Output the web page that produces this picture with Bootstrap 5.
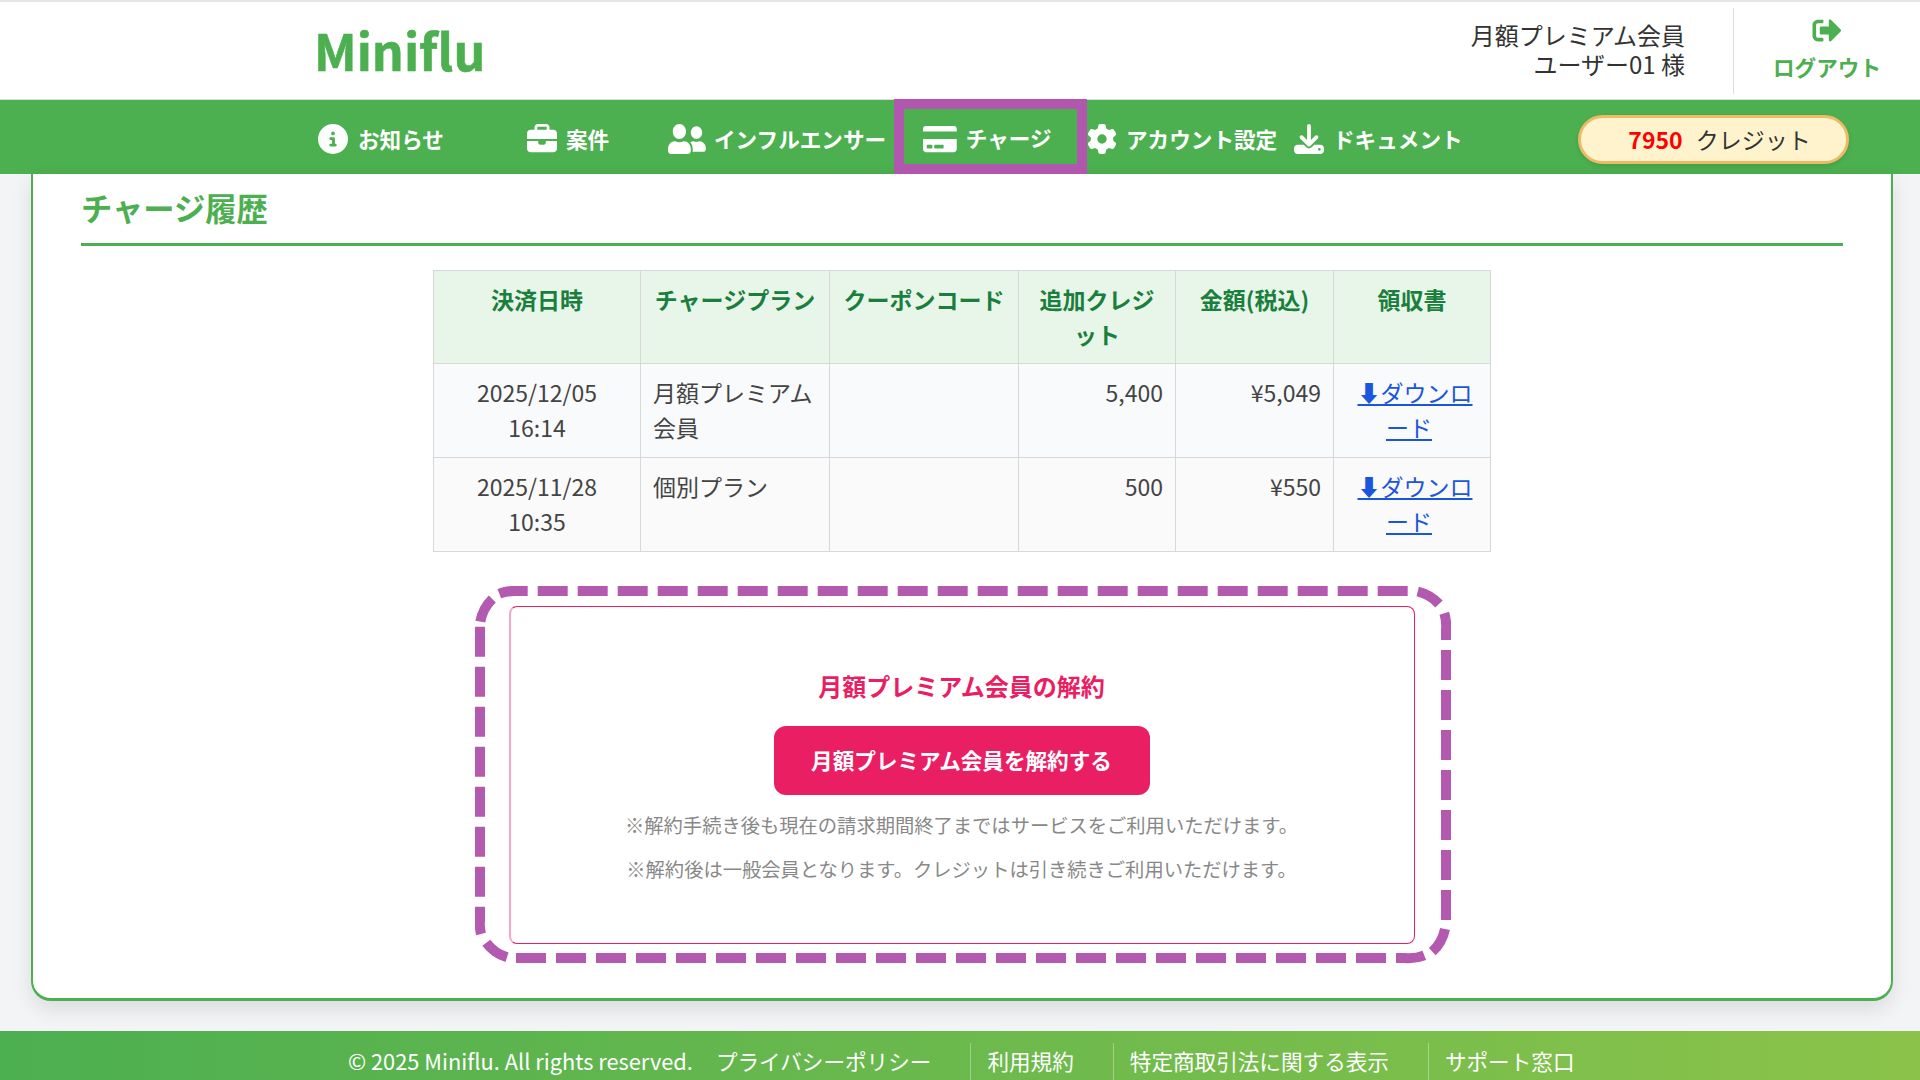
<!DOCTYPE html>
<html lang="ja">
<head>
<meta charset="utf-8">
<title>Miniflu</title>
<link href="https://cdn.jsdelivr.net/npm/bootstrap@5.3.0/dist/css/bootstrap.min.css" rel="stylesheet">
<style>
html,body{height:1080px;overflow:hidden}
body{background:#f3f4f6;font-family:"Noto Sans CJK JP","Noto Sans",sans-serif;color:#333;border-top:2px solid #e5e5e5}
.top-head{height:97px;background:#fff;padding-left:314px}
.brand-logo{font-size:50px;font-weight:700;color:#4caf50;line-height:1;text-decoration:none;padding-bottom:4px;-webkit-text-stroke:.6px #4caf50}
.user-info{font-size:24px;line-height:29px;text-align:right;margin-right:48px;padding-bottom:4px}
.logout-box{width:187px;height:86px;border-left:1px solid #ddd;color:#4caf50;font-weight:700;font-size:21.6px;line-height:28px;text-decoration:none;padding-bottom:5px}
.logout-box svg{width:32px;height:29px;fill:#4caf50}
.green-nav{height:75px;background:#4caf50;padding-left:315px;border-top:1px solid #ddd}
.nav-slot{height:75px;margin-top:-1px;padding-top:5px;color:#fff;font-weight:700;font-size:21.6px;text-decoration:none;white-space:nowrap}
.nav-slot svg{fill:#fff;height:30px;flex:none}
.nav-slot svg.people-icon{width:38px}
.slot-a{width:212px;padding-left:3px;gap:10px}
.slot-b{width:141px;gap:9px}
.slot-c{width:226px;gap:8px}
.slot-d{width:193px;padding-left:19px;padding-top:0;gap:9px;border:10px solid #b157ae}
.slot-d svg,.slot-d span{position:relative;top:2px}
.slot-e{width:207px;gap:9px}
.slot-f{width:284px;gap:9px}
.credit-pill{width:271px;height:49px;margin-top:5px;padding-left:12px;border-radius:25px;background:#fff3cd;border:3px solid #edbb66;font-size:23px;box-shadow:0 2px 4px rgba(0,0,0,.1);gap:13px}
.credit-pill b{color:#f00}
.sheet{margin:0 27px 0 31px;height:827px;background:#fff;border:solid #4caf50;border-width:0 2px 3px 2px;border-radius:0 0 20px 20px;box-shadow:0 8px 20px rgba(0,0,0,.1);padding:0 48px}
.sheet-title{font-size:31.3px;font-weight:700;color:#4caf50;margin:0;height:72px;line-height:67px;border-bottom:3px solid #4caf50}
.hist-table{width:1057px;table-layout:fixed;margin:24px auto 0;border-collapse:collapse;font-size:23px;line-height:34.5px;color:#444}
.hist-table th,.hist-table td{border:1px solid #d8d8d8;padding:11px 12px 12px;vertical-align:top}
.hist-table td{padding-bottom:13px}
.hist-table th{background:#e8f5e9;color:#1a7f3c;text-align:center;font-weight:700}
.hist-table tbody tr:nth-child(1) td{background:#f9fafc}
.hist-table tbody tr:nth-child(2) td{background:#fafafa}
.hist-table a{color:#1a56db}
.hist-table td.dl-cell{padding-left:10px;padding-right:16px;text-indent:12px}
.dash-frame{width:976px;height:378px;margin:34px 0 0 394px;padding:20px 36px 20px 34px}
.dash-lines{position:absolute;left:0;top:0;width:976px;height:378px;fill:none;stroke:#b359b0;stroke-width:10}
.cancel-box{height:338px;border:1px solid #e91e63;border-left:2px solid #f8a5c2;border-radius:8px;text-align:center;padding:61px 2px 0 0}
.cancel-title{color:#e91e63;font-weight:700;font-size:24px;line-height:36px;margin-bottom:22px}
.cancel-btn{width:376px;height:69px;background:#e91e63;color:#fff;border:0;border-radius:12px;font-weight:700;font-size:21.6px}
.cancel-note{color:#888;font-size:19.3px;line-height:28px;margin:16px 0 0}
.page-foot{height:60px;margin-top:30px;padding:12px 0 0 348px;background:linear-gradient(90deg,#4caf50,#8bc34a);color:#fff;font-size:21.6px}
.foot-copy{font-size:21.8px;line-height:36px;margin-right:23px}
.foot-link{height:48px;line-height:36px;padding-right:39px;margin-right:16px;border-right:1px solid rgba(255,255,255,.35)}
.foot-last{border-right:0;margin-right:0}
</style>
</head>
<body>
<header class="top-head d-flex align-items-center justify-content-between">
  <a class="brand-logo" href="#">Miniflu</a>
  <div class="d-flex align-items-center">
    <div class="user-info">月額プレミアム会員<br>ユーザー01 様</div>
    <a class="logout-box d-flex flex-column align-items-center justify-content-center" href="#">
      <svg viewBox="0 0 512 512"><path d="M497 273L329 441c-15 15-41 4.500-41-17v-96H152c-13.300 0-24-10.700-24-24v-96c0-13.300 10.700-24 24-24h136V88c0-21.400 25.900-32 41-17l168 168c9.300 9.400 9.300 24.600 0 34zM192 436v-40c0-6.600-5.400-12-12-12H96c-17.700 0-32-14.300-32-32V160c0-17.700 14.300-32 32-32h84c6.600 0 12-5.400 12-12V76c0-6.600-5.400-12-12-12H96c-53 0-96 43-96 96v192c0 53 43 96 96 96h84c6.600 0 12-5.400 12-12z"/></svg>
      <span class="mt-2">ログアウト</span>
    </a>
  </div>
</header>
<nav class="green-nav d-flex align-items-center">
  <a class="nav-slot slot-a d-flex align-items-center" href="#"><svg viewBox="0 0 512 512"><path d="M256 512A256 256 0 1 0 256 0a256 256 0 1 0 0 512zM216 336h24V272H216c-13.300 0-24-10.700-24-24s10.700-24 24-24h48c13.300 0 24 10.700 24 24v88h8c13.300 0 24 10.700 24 24s-10.700 24-24 24H216c-13.300 0-24-10.700-24-24s10.700-24 24-24zm40-208a32 32 0 1 1 0 64 32 32 0 1 1 0-64z"/></svg>お知らせ</a>
  <a class="nav-slot slot-b d-flex align-items-center" href="#"><svg viewBox="0 0 512 512"><path d="M184 48H328c4.400 0 8 3.600 8 8V96H176V56c0-4.400 3.600-8 8-8zm-56 8V96H64C28.700 96 0 124.700 0 160v96H192 320 512V160c0-35.300-28.700-64-64-64H384V56c0-30.900-25.100-56-56-56H184c-30.900 0-56 25.100-56 56zM512 288H320v32c0 17.700-14.300 32-32 32H224c-17.700 0-32-14.300-32-32V288H0V416c0 35.300 28.700 64 64 64H448c35.300 0 64-28.700 64-64V288z"/></svg>案件</a>
  <a class="nav-slot slot-c d-flex align-items-center" href="#"><svg class="people-icon" viewBox="0 32 640 448" preserveAspectRatio="none"><path d="M192 256c61.900 0 112-50.100 112-112S253.900 32 192 32 80 82.100 80 144s50.100 112 112 112zm76.800 32h-8.300c-20.800 10-43.900 16-68.500 16s-47.600-6-68.500-16h-8.300C51.600 288 0 339.600 0 403.200V432c0 26.500 21.500 48 48 48h288c26.500 0 48-21.500 48-48v-28.800c0-63.600-51.600-115.200-115.200-115.200zM480 256c53 0 96-43 96-96s-43-96-96-96-96 43-96 96 43 96 96 96zm48 32h-3.800c-13.900 4.800-28.600 8-44.200 8s-30.300-3.200-44.200-8H432c-20.400 0-39.200 5.900-55.700 15.400 24.400 26.300 39.700 61.200 39.700 99.800v38.400c0 2.200-.5 4.300-.6 6.400H592c26.500 0 48-21.500 48-48 0-61.900-50.100-112-112-112z"/></svg>インフルエンサー</a>
  <a class="nav-slot slot-d d-flex align-items-center" href="#"><svg viewBox="0 0 576 512"><path d="M0 432c0 26.500 21.500 48 48 48h480c26.500 0 48-21.500 48-48V256H0v176zm192-68c0-6.600 5.400-12 12-12h136c6.600 0 12 5.400 12 12v40c0 6.600-5.400 12-12 12H204c-6.600 0-12-5.400-12-12v-40zm-128 0c0-6.600 5.400-12 12-12h72c6.600 0 12 5.400 12 12v40c0 6.600-5.400 12-12 12H76c-6.600 0-12-5.400-12-12v-40zM576 80v48H0V80c0-26.500 21.500-48 48-48h480c26.500 0 48 21.500 48 48z"/></svg><span>チャージ</span></a>
  <a class="nav-slot slot-e d-flex align-items-center" href="#"><svg viewBox="0 0 512 512"><path d="M495.900 166.600c3.200 8.700 .5 18.400-6.400 24.600l-43.300 39.400c1.100 8.300 1.700 16.800 1.700 25.400s-.6 17.100-1.700 25.400l43.300 39.400c6.900 6.200 9.600 15.900 6.400 24.600c-4.400 11.900-9.700 23.300-15.800 34.300l-4.700 8.100c-6.600 11-14 21.400-22.100 31.200c-5.900 7.200-15.700 9.600-24.500 6.800l-55.700-17.700c-13.400 10.300-28.200 18.900-44 25.400l-12.500 57.100c-2 9.100-9 16.300-18.200 17.800c-13.800 2.300-28 3.500-42.500 3.500s-28.700-1.200-42.500-3.500c-9.200-1.500-16.200-8.700-18.200-17.800l-12.500-57.100c-15.800-6.500-30.600-15.100-44-25.400L83.100 425.900c-8.800 2.800-18.600 .3-24.500-6.800c-8.100-9.800-15.500-20.200-22.100-31.200l-4.700-8.100c-6.100-11-11.400-22.400-15.800-34.300c-3.200-8.700-.5-18.400 6.400-24.600l43.300-39.400C64.600 273.100 64 264.600 64 256s.6-17.100 1.700-25.400L22.400 191.200c-6.900-6.200-9.600-15.900-6.400-24.600c4.400-11.900 9.700-23.300 15.800-34.300l4.700-8.100c6.600-11 14-21.400 22.100-31.200c5.900-7.200 15.700-9.600 24.500-6.800l55.700 17.700c13.400-10.300 28.200-18.900 44-25.400l12.500-57.100c2-9.100 9-16.300 18.200-17.800C227.300 1.200 241.500 0 256 0s28.700 1.200 42.500 3.500c9.200 1.500 16.200 8.700 18.200 17.800l12.500 57.100c15.800 6.500 30.600 15.100 44 25.400l55.700-17.700c8.800-2.800 18.600-.3 24.500 6.800c8.100 9.800 15.500 20.200 22.100 31.200l4.700 8.100c6.100 11 11.400 22.400 15.800 34.300zM256 336a80 80 0 1 0 0-160 80 80 0 1 0 0 160z"/></svg>アカウント設定</a>
  <a class="nav-slot slot-f d-flex align-items-center" href="#"><svg viewBox="0 0 512 512"><path d="M288 32c0-17.700-14.300-32-32-32s-32 14.300-32 32V274.700l-73.400-73.400c-12.500-12.500-32.800-12.500-45.300 0s-12.500 32.800 0 45.300l128 128c12.500 12.500 32.800 12.500 45.300 0l128-128c12.500-12.500 12.500-32.800 0-45.300s-32.800-12.500-45.300 0L288 274.700V32zM64 352c-35.300 0-64 28.700-64 64v32c0 35.300 28.700 64 64 64H448c35.300 0 64-28.700 64-64V416c0-35.300-28.700-64-64-64H346.500l-45.300 45.300c-25 25-65.500 25-90.500 0L165.500 352H64zm368 56a24 24 0 1 1 0 48 24 24 0 1 1 0-48z"/></svg>ドキュメント</a>
  <div class="credit-pill d-flex align-items-center justify-content-center"><b>7950</b><span>クレジット</span></div>
</nav>
<main class="sheet">
  <h2 class="sheet-title">チャージ履歴</h2>
  <table class="hist-table">
    <colgroup><col style="width:207px"><col style="width:189px"><col style="width:189px"><col style="width:157px"><col style="width:158px"><col style="width:157px"></colgroup>
    <thead><tr><th>決済日時</th><th>チャージプラン</th><th>クーポンコード</th><th>追加クレジット</th><th>金額(税込)</th><th>領収書</th></tr></thead>
    <tbody>
      <tr><td class="text-center">2025/12/05<br>16:14</td><td>月額プレミアム会員</td><td></td><td class="text-end">5,400</td><td class="text-end">¥5,049</td><td class="text-center dl-cell"><a href="#">⬇ダウンロード</a></td></tr>
      <tr><td class="text-center">2025/11/28<br>10:35</td><td>個別プラン</td><td></td><td class="text-end">500</td><td class="text-end">¥550</td><td class="text-center dl-cell"><a href="#">⬇ダウンロード</a></td></tr>
    </tbody>
  </table>
  <section class="dash-frame position-relative">
    <svg class="dash-lines" viewBox="475 586 976 378" aria-hidden="true">
      <path stroke-dasharray="30 10" d="M537.700 591H1407.700M1446 650V920M516 958H1386M480 626.700V896.700"/>
      <path d="M480.300 621.700A42 42 0 0 1 492.300 599M499.300 593.700A42 42 0 0 1 517 591H527.700M1417.700 591.500A42 42 0 0 1 1439 604M1444.300 613.300A42 42 0 0 1 1446 630V640M1396 958H1405A42 42 0 0 0 1424.300 955.300M1432.300 951.700A42 42 0 0 0 1445 929M480 906.700V920A42 42 0 0 0 481 934M486.300 942.700A42 42 0 0 0 507 957.300"/>
    </svg>
    <div class="cancel-box">
      <div class="cancel-title">月額プレミアム会員の解約</div>
      <button class="btn cancel-btn" type="button">月額プレミアム会員を解約する</button>
      <p class="cancel-note">※解約手続き後も現在の請求期間終了まではサービスをご利用いただけます。</p>
      <p class="cancel-note">※解約後は一般会員となります。クレジットは引き続きご利用いただけます。</p>
    </div>
  </section>
</main>
<footer class="page-foot d-flex">
  <span class="foot-copy">© 2025 Miniflu. All rights reserved.</span>
  <span class="foot-link">プライバシーポリシー</span>
  <span class="foot-link">利用規約</span>
  <span class="foot-link">特定商取引法に関する表示</span>
  <span class="foot-link foot-last">サポート窓口</span>
</footer>
</body>
</html>
